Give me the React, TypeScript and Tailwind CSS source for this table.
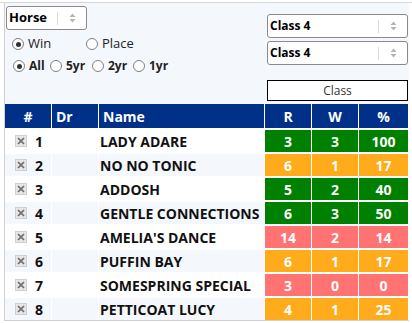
import React from "react";

type Tone = "green" | "amber" | "red";

const runners: { no: number; name: string; r: number; w: number; pct: number; tone: Tone }[] = [
  { no: 1, name: "LADY ADARE", r: 3, w: 3, pct: 100, tone: "green" },
  { no: 2, name: "NO NO TONIC", r: 6, w: 1, pct: 17, tone: "amber" },
  { no: 3, name: "ADDOSH", r: 5, w: 2, pct: 40, tone: "green" },
  { no: 4, name: "GENTLE CONNECTIONS", r: 6, w: 3, pct: 50, tone: "green" },
  { no: 5, name: "AMELIA'S DANCE", r: 14, w: 2, pct: 14, tone: "red" },
  { no: 6, name: "PUFFIN BAY", r: 6, w: 1, pct: 17, tone: "amber" },
  { no: 7, name: "SOMESPRING SPECIAL", r: 3, w: 0, pct: 0, tone: "red" },
  { no: 8, name: "PETTICOAT LUCY", r: 4, w: 1, pct: 25, tone: "amber" },
];

const toneBg: Record<Tone, string> = {
  green: "bg-[#008000]",
  amber: "bg-[#ffab1b]",
  red: "bg-[#ff7373]",
};

const cols = "grid grid-cols-[46px_46px_165px_46px_46px_49px] gap-x-[1px]";

function Arrows() {
  return (
    <svg width="7" height="10" viewBox="0 0 7 10" className="shrink-0">
      <path d="M3.5 0.5 L6.5 4 H0.5 Z" fill="#b5b5b5" />
      <path d="M3.5 9.5 L6.5 6 H0.5 Z" fill="#b5b5b5" />
    </svg>
  );
}

function Select({ label, className, text }: { label: string; className: string; text: string }) {
  return (
    <div
      className={`flex items-center h-[24px] bg-white border border-[#8a8a8a] rounded-[3px] pl-[2px] ${className}`}
    >
      <span className={`flex-1 font-bold text-black ${text}`}>{label}</span>
      <span className="w-[1px] h-[13px] bg-[#dcdcdc]" />
      <span className="w-[28px] flex justify-center">
        <Arrows />
      </span>
    </div>
  );
}

function Radio({ on }: { on?: boolean }) {
  return (
    <span className="w-[12px] h-[12px] rounded-full border border-[#808080] bg-white flex items-center justify-center shrink-0">
      {on && <span className="w-[5px] h-[5px] rounded-full bg-[#333]" />}
    </span>
  );
}

function RemoveBox() {
  return (
    <span className="w-[12px] h-[12px] bg-[#e6e6e6] border border-[#cfcfcf] flex items-center justify-center">
      <svg width="8" height="8" viewBox="0 0 8 8">
        <path d="M1 1 L7 7 M7 1 L1 7" stroke="#6b6b6b" strokeWidth="1.7" />
      </svg>
    </span>
  );
}

export default function App() {
  return (
    <div className="w-[412px] h-[323px] bg-white pt-[2px] font-['Open_Sans',sans-serif]">
      <div className="border-t border-[#d6d6d6]">
        <div className="ml-[4px] w-[405px] border-l border-b border-[#d0d0d0] bg-[#f4f7fc]">
          {/* filters */}
          <div className="flex h-[100px]">
            <div className="flex-1 pl-[1px] pt-[3px]">
              <Select label="Horse" className="w-[81px]" text="text-[13px]" />
              <div className="flex items-center h-[12px] mt-[8px] text-[13px] text-[#222]">
                <span className="flex items-center w-[80px] pl-[6px] gap-[4px]">
                  <Radio on />
                  Win
                </span>
                <span className="flex items-center gap-[4px]">
                  <Radio />
                  Place
                </span>
              </div>
              <div className="flex items-center h-[12px] mt-[10px] text-[12px] font-bold text-[#222]">
                <span className="flex items-center w-[44px] pl-[7px] gap-[4px]">
                  <Radio on />
                  All
                </span>
                <span className="flex items-center w-[42px] gap-[4px]">
                  <Radio />
                  5yr
                </span>
                <span className="flex items-center w-[41px] gap-[4px]">
                  <Radio />
                  2yr
                </span>
                <span className="flex items-center gap-[4px]">
                  <Radio />
                  1yr
                </span>
              </div>
            </div>
            <div className="w-[143px] pt-[11px] pl-[1px]">
              <Select label="Class 4" className="w-[141px]" text="text-[12px]" />
              <Select label="Class 4" className="w-[141px] mt-[3px]" text="text-[12px]" />
              <div className="mt-[15px] w-[141px] h-[21px] bg-white border border-black flex items-center justify-center text-[12px] text-[#333]">
                Class
              </div>
            </div>
          </div>

          {/* table */}
          <div className="bg-white flex flex-col gap-y-[2px] mt-[1px]">
            <div className={`${cols} h-[24px] text-[14px] font-bold text-white`}>
              <div className="bg-[#003087] flex items-center justify-center">#</div>
              <div className="bg-[#003087] flex items-center pl-[4px]">Dr</div>
              <div className="bg-[#003087] flex items-center pl-[4px]">Name</div>
              <div className="bg-[#003087] flex items-center justify-center">R</div>
              <div className="bg-[#003087] flex items-center justify-center">W</div>
              <div className="bg-[#003087] flex items-center justify-center">%</div>
            </div>
            {runners.map((h, i) => {
              const rowBg = i % 2 === 0 ? "bg-white" : "bg-[#f4f7fc]";
              return (
                <div key={h.no} className={`${cols} h-[22px] text-[14px] font-bold`}>
                  <div className={`${rowBg} flex items-center pl-[10px] gap-[8px] text-[#111]`}>
                    <RemoveBox />
                    {h.no}
                  </div>
                  <div className={rowBg} />
                  <div className={`${rowBg} flex items-center pl-[1px] text-[#111]`}>{h.name}</div>
                  <div className={`${toneBg[h.tone]} flex items-center justify-center text-white`}>{h.r}</div>
                  <div className={`${toneBg[h.tone]} flex items-center justify-center text-white`}>{h.w}</div>
                  <div className={`${toneBg[h.tone]} flex items-center justify-center text-white`}>{h.pct}</div>
                </div>
              );
            })}
          </div>
        </div>
      </div>
    </div>
  );
}
